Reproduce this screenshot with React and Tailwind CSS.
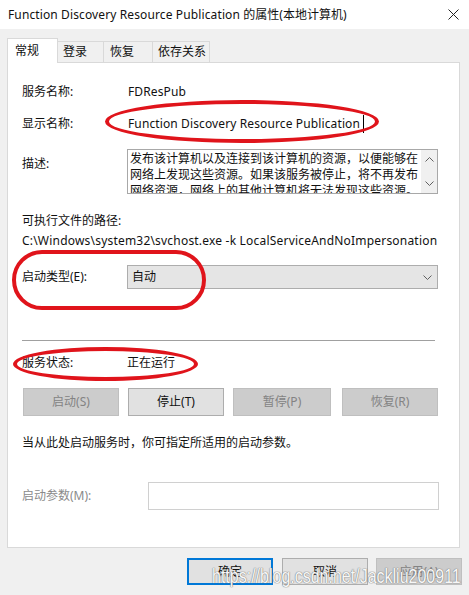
import React from "react";

const Chevron = ({ up, className }) => (
    <svg width="9" height="5" viewBox="0 0 9 5" className={className}>
        <path
            d={up ? "M0.5 4.5 L4.5 0.5 L8.5 4.5" : "M0.5 0.5 L4.5 4.5 L8.5 0.5"}
            fill="none"
            stroke="#606060"
            strokeWidth="1"
        />
    </svg>
);

const Label = ({ children, className = "" }) => (
    <div className={`w-[105px] shrink-0 ${className}`}>{children}</div>
);

const App = () => {
    return (
        <div className="relative w-[469px] h-[595px] bg-[#f0f0f0] overflow-hidden text-[12px] leading-[20px] text-[#111] font-['Noto_Sans','Noto_Sans_CJK_SC',sans-serif]">
            {/* Title bar */}
            <div className="h-[29px] bg-white flex items-center justify-between pl-[8px] pr-[10px]">
                <span>
                    <span className="tracking-[0.12px]">Function Discovery Resource Publication </span>
                    的属性(本地计算机)
                </span>
                <svg width="11" height="11" viewBox="0 0 11 11">
                    <path d="M0.5 0.5 L10.5 10.5 M10.5 0.5 L0.5 10.5" stroke="#222" strokeWidth="1" />
                </svg>
            </div>

            {/* Tabs */}
            <div className="h-[33px] flex items-end pl-[7px]">
                <div className="relative z-10 -mb-px h-[25px] w-[51px] bg-white border border-b-0 border-[#d9d9d9] pl-[7px] flex items-center">
                    常规
                </div>
                <div className="h-[21px] w-[46px] border-t border-r border-[#d9d9d9] pl-[5px] flex items-center">登录</div>
                <div className="h-[21px] w-[49px] border-t border-r border-[#d9d9d9] pl-[6px] flex items-center">恢复</div>
                <div className="h-[21px] w-[57px] border-t border-r border-[#d9d9d9] pl-[5px] flex items-center">依存关系</div>
            </div>

            {/* Panel */}
            <div className="ml-[7px] w-[453px] h-[486px] bg-white border border-[#d9d9d9] pl-[14px] flex flex-col">
                <div className="mt-[19px] h-[20px] flex items-center">
                    <Label>服务名称:</Label>
                    <span className="pl-px tracking-[0.12px]">FDResPub</span>
                </div>
                <div className="mt-[12px] h-[20px] flex items-center">
                    <Label>显示名称:</Label>
                    <span className="pl-px tracking-[0.12px]">Function Discovery Resource Publication</span>
                    <span className="ml-[3px] w-px h-[18px] bg-black" />
                </div>
                <div className="mt-[15px] flex items-start">
                    <Label className="mt-[5px]">描述:</Label>
                    <div className="w-[311px] h-[45px] border border-[#a8a8a8] flex overflow-hidden">
                        <div className="flex-1 pl-[2px] pt-px leading-[16px] overflow-hidden">
                            发布该计算机以及连接到该计算机的资源，以便能够在网络上发现这些资源。如果该服务被停止，将不再发布网络资源，网络上的其他计算机将无法发现这些资源。
                        </div>
                        <div className="w-[16px] bg-[#f0f0f0] flex flex-col items-center justify-between py-[7px]">
                            <Chevron up />
                            <Chevron />
                        </div>
                    </div>
                </div>
                <div className="mt-[17px] h-[20px] flex items-center">可执行文件的路径:</div>
                <div className="h-[20px] flex items-center tracking-[0.2px]">
                    C:\Windows\system32\svchost.exe -k LocalServiceAndNoImpersonation
                </div>
                <div className="mt-[14px] flex items-center">
                    <Label>启动类型(E):</Label>
                    <div className="w-[311px] h-[24px] bg-[#e5e5e5] border border-[#adadad] flex items-center justify-between pl-[4px] pr-[5px]">
                        <span>自动</span>
                        <Chevron />
                    </div>
                </div>
                <div className="mt-[51px] w-[413px] h-px bg-[#a0a0a0]" />
                <div className="mt-[12px] h-[20px] flex items-center">
                    <Label>服务状态:</Label>
                    <span>正在运行</span>
                </div>
                <div className="mt-[15px] h-[28px] flex pl-px">
                    <div className="w-[96px] bg-[#cccccc] border border-[#bfbfbf] text-[#838383] flex items-center justify-center">启动(S)</div>
                    <div className="ml-[9px] w-[96px] bg-[#e1e1e1] border border-[#adadad] flex items-center justify-center">停止(T)</div>
                    <div className="ml-[9px] w-[98px] bg-[#cccccc] border border-[#bfbfbf] text-[#838383] flex items-center justify-center">暂停(P)</div>
                    <div className="ml-[11px] w-[96px] bg-[#cccccc] border border-[#bfbfbf] text-[#838383] flex items-center justify-center">恢复(R)</div>
                </div>
                <div className="mt-[17px] h-[20px] flex items-center">当从此处启动服务时，你可指定所适用的启动参数。</div>
                <div className="mt-[29px] flex items-center">
                    <div className="w-[126px] shrink-0 text-[#8a8a8a]">启动参数(M):</div>
                    <div className="w-[291px] h-[28px] border border-[#d0d0d0]" />
                </div>
            </div>

            {/* Dialog buttons */}
            <div className="mt-[10px] h-[27px] flex justify-end pr-[7px]">
                <div className="w-[86px] bg-[#e1e1e1] border-2 border-[#0078d7] flex items-center justify-center">确定</div>
                <div className="ml-[9px] w-[86px] bg-[#e1e1e1] border border-[#adadad] flex items-center justify-center">取消</div>
                <div className="ml-[8px] w-[86px] bg-[#cccccc] border border-[#bfbfbf] text-[#838383] flex items-center justify-center">应用(A)</div>
            </div>

            {/* Red annotation marks */}
            <div className="absolute left-[105px] top-[100px] w-[274px] h-[43px] rounded-[50%] border-[4px] border-[#e0141b]" />
            <div className="absolute left-[12px] top-[250px] w-[194px] h-[60px] rounded-[30px] border-[4px] border-[#e0141b]" />
            <div className="absolute left-[13px] top-[347px] w-[185px] h-[34px] rounded-[50%] border-[4px] border-[#e0141b]" />

            {/* Watermark */}
            <div className="absolute left-[212px] top-[563px] text-[16px] leading-[20px] scale-y-[1.3] origin-top-left text-[#f7f7f7] font-['Liberation_Sans',sans-serif] [text-shadow:0_0_1px_#777,0_0_1px_#777]">
                https://blog.csdn.net/Jackliu200911
            </div>
        </div>
    );
};

export default App;
